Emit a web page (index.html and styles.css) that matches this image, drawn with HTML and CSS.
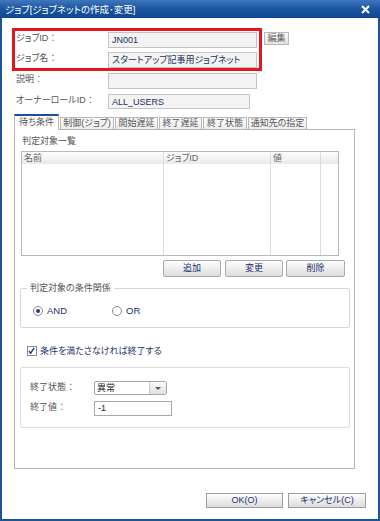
FILE: index.html
```html
<!DOCTYPE html>
<html lang="ja">
<head>
  <meta charset="UTF-8">
  <title>ジョブ[ジョブネットの作成･変更]</title>
  <link rel="stylesheet" href="styles.css">
</head>
<body>
  <div class="dialog">
    <div class="titlebar">
      <span>ジョブ[ジョブネットの作成･変更]</span>
      <svg class="close" width="9" height="9" viewBox="0 0 9 9"><path d="M1 1L8 8M8 1L1 8" stroke="#fff" stroke-width="2"/></svg>
    </div>
    <div class="body">
      <div class="form">
        <div class="mark"></div>
        <div class="row r1"><span class="label">ジョブID ：</span><div class="field">JN001</div><div class="small-btn">編集</div></div>
        <div class="row r2"><span class="label">ジョブ名 ：</span><div class="field">スタートアップ記事用ジョブネット</div></div>
        <div class="row r3"><span class="label">説明 ：</span><div class="field"></div></div>
        <div class="row r4"><span class="label">オーナーロールID ：</span><div class="field short">ALL_USERS</div></div>
      </div>

      <div class="tabs">
        <div class="tab active w1">待ち条件</div>
        <div class="tab w2">制御(ジョブ)</div>
        <div class="tab w3">開始遅延</div>
        <div class="tab w4">終了遅延</div>
        <div class="tab w5">終了状態</div>
        <div class="tab w6">通知先の指定</div>
      </div>
      <div class="panel">
        <div class="caption">判定対象一覧</div>
        <div class="grid">
          <div class="col c1"><div class="head">名前</div></div>
          <div class="col c2"><div class="head">ジョブID</div></div>
          <div class="col c3"><div class="head">値</div></div>
          <div class="col c4"><div class="head"></div></div>
        </div>
        <div class="actions">
          <div class="btn">追加</div>
          <div class="btn">変更</div>
          <div class="btn wide">削除</div>
        </div>

        <fieldset class="relation">
          <legend>判定対象の条件関係</legend>
          <div class="radios">
            <div class="radio on"><span class="dot"></span>AND</div>
            <div class="radio"><span class="dot"></span>OR</div>
          </div>
        </fieldset>

        <div class="check">
          <span class="box"><svg width="10" height="10" viewBox="0 0 10 10"><path d="M2 5L4 7.5L8 1.5" fill="none" stroke="#1b3f8f" stroke-width="1.6"/></svg></span>
          条件を満たさなければ終了する
        </div>

        <div class="endbox">
          <div class="erow">
            <span class="elabel">終了状態 ：</span>
            <div class="select"><span>異常</span><span class="arrow"></span></div>
          </div>
          <div class="erow">
            <span class="elabel">終了値 ：</span>
            <div class="evalue">-1</div>
          </div>
        </div>
      </div>

      <div class="footer">
        <div class="fbtn ok">OK(O)</div>
        <div class="fbtn cancel">キャンセル(C)</div>
      </div>
    </div>
  </div>
</body>
</html>
```

FILE: styles.css
```css
body {
  margin: 0;
  font-family: "Liberation Sans", "Noto Sans CJK JP", sans-serif;
  font-size: 9px;
  font-feature-settings: "palt";
  color: #555;
  background: #fff;
  white-space: nowrap;
}
.dialog {
  width: 380px;
  height: 521px;
  display: flex;
  flex-direction: column;
}
.titlebar {
  height: 18px;
  flex: none;
  display: flex;
  align-items: center;
  justify-content: space-between;
  padding: 0 10px 0 5px;
  background: linear-gradient(#3f77bd, #1a559f 50%, #0e4890);
  color: #fff;
  font-size: 9.5px;
}
.close {
  display: block;
}
.body {
  flex: 1;
  border: 2px solid #1a559c;
  border-top: none;
  background: #fff;
}

/* header form */
.form {
  position: relative;
  padding: 14px 0 0 14px;
}
.mark {
  position: absolute;
  left: 10px;
  top: 10px;
  width: 250px;
  height: 43px;
  box-sizing: border-box;
  border: 3px solid #e5161d;
}
.row {
  display: flex;
  height: 16px;
}
.r1 { margin-bottom: 4px; }
.r2 { margin-bottom: 5px; }
.r3 { margin-bottom: 5px; }
.r4 { height: 15px; }
.label {
  width: 92px;
  line-height: 12px;
  color: #555;
}
.field {
  width: 149px;
  box-sizing: border-box;
  border: 1px solid #c4c4c4;
  background: #f3f3f3;
  padding-left: 3px;
  line-height: 15px;
  color: #22305a;
  overflow: hidden;
}
.field.short {
  width: 142px;
  line-height: 14px;
}
.small-btn {
  margin-left: 7px;
  width: 25px;
  height: 13px;
  box-sizing: border-box;
  border: 1px solid #b8b8b8;
  background: linear-gradient(#fafafa, #e2e2e2);
  text-align: center;
  line-height: 11px;
  color: #666;
}

/* tabs */
.tabs {
  display: flex;
  align-items: flex-end;
  gap: 1px;
  margin: 5px 0 0 12px;
  height: 15px;
}
.tab {
  height: 12px;
  box-sizing: border-box;
  border: 1px solid #b8b8b8;
  border-bottom: none;
  background: linear-gradient(#fbfbfb, #ececec);
  text-align: center;
  line-height: 11px;
  color: #555;
}
.tab.active {
  height: 16px;
  margin-bottom: -1px;
  position: relative;
  border-top: 2px solid #1b4f9b;
  background: #fff;
  line-height: 12px;
}
.w1 { width: 45px; }
.w2 { width: 54px; }
.w3 { width: 43px; }
.w4 { width: 43px; }
.w5 { width: 44px; }
.w6 { width: 59px; }

.panel {
  margin-left: 12px;
  width: 341px;
  height: 340px;
  box-sizing: border-box;
  border: 1px solid #b5b5b5;
}
.caption {
  margin: 4px 0 0 7px;
  line-height: 14px;
}
.grid {
  margin: 3px 0 0 6px;
  width: 318px;
  height: 105px;
  box-sizing: border-box;
  border: 1px solid #b9b9b9;
  display: flex;
}
.col {
  border-right: 1px solid #dcdcdc;
}
.c1 { width: 141px; }
.c2 { width: 106px; }
.c3 { width: 49px; }
.c4 { flex: 1; border-right: none; }
.head {
  height: 12px;
  line-height: 12px;
  padding-left: 2px;
  background: linear-gradient(#fdfdfd, #e9e9e9);
  color: #666;
}
.actions {
  display: flex;
  justify-content: flex-end;
  gap: 4px;
  margin-top: 4px;
  padding-right: 9px;
}
.btn {
  width: 58px;
  height: 17px;
  box-sizing: border-box;
  border: 1px solid #a9a9a9;
  border-radius: 2px;
  background: linear-gradient(#fdfdfd, #dedede);
  text-align: center;
  line-height: 15px;
  color: #23306a;
}
.btn.wide {
  width: 59px;
  margin-left: -1px;
}

.relation {
  margin: 5px 0 0 5px;
  padding: 0;
  width: 330px;
  box-sizing: border-box;
  border: 1px solid #d6d6d6;
  border-radius: 2px;
}
.relation legend {
  margin-left: 6px;
  padding: 0 3px;
  line-height: 12px;
  color: #555;
}
.radios {
  display: flex;
  align-items: center;
  height: 33px;
  padding-left: 12px;
}
.radio {
  display: flex;
  align-items: center;
  gap: 4px;
  width: 79px;
  font-size: 9.5px;
  color: #1e2d6d;
}
.dot {
  width: 10px;
  height: 10px;
  box-sizing: border-box;
  border: 1px solid #888;
  border-radius: 50%;
  background: #fff;
  position: relative;
}
.radio.on .dot::after {
  content: "";
  position: absolute;
  left: 2px;
  top: 2px;
  width: 4px;
  height: 4px;
  border-radius: 50%;
  background: #1c3f8d;
}

.check {
  display: flex;
  align-items: center;
  gap: 3px;
  margin: 18px 0 0 12px;
  color: #23306a;
  line-height: 10px;
}
.box {
  width: 10px;
  height: 10px;
  box-sizing: border-box;
  border: 1px solid #8a8a8a;
  background: #fff;
  display: flex;
}
.box svg {
  margin: -1px 0 0 -1px;
}

.endbox {
  margin: 11px 0 0 5px;
  width: 330px;
  height: 61px;
  box-sizing: border-box;
  border: 1px solid #dcdcdc;
  border-radius: 2px;
  padding: 13px 0 0 9px;
}
.erow {
  display: flex;
}
.erow + .erow {
  margin-top: 6px;
}
.elabel {
  width: 64px;
  line-height: 12px;
}
.select {
  width: 73px;
  height: 14px;
  box-sizing: border-box;
  border: 1px solid #a6a6a6;
  border-radius: 2px;
  background: #fff;
  display: flex;
  justify-content: space-between;
  line-height: 12px;
  padding-left: 2px;
  color: #222;
}
.arrow {
  width: 16px;
  border-left: 1px solid #c8c8c8;
  background: linear-gradient(#fbfbfb, #e0e0e0);
  position: relative;
}
.arrow::after {
  content: "";
  position: absolute;
  left: 5px;
  top: 5px;
  border: 3px solid transparent;
  border-top: 3px solid #555;
  border-bottom: none;
}
.evalue {
  width: 78px;
  height: 15px;
  box-sizing: border-box;
  border: 1px solid #a8a8a8;
  background: #fff;
  padding-left: 3px;
  line-height: 13px;
  color: #222;
}

.footer {
  display: flex;
  justify-content: flex-end;
  gap: 5px;
  margin-top: 24px;
  padding-right: 12px;
}
.fbtn {
  height: 15px;
  box-sizing: border-box;
  border: 1px solid #9d9d9d;
  background: linear-gradient(#fdfdfd, #dcdcdc);
  text-align: center;
  line-height: 13px;
  color: #23306a;
}
.ok { width: 77px; }
.cancel { width: 78px; }
```
